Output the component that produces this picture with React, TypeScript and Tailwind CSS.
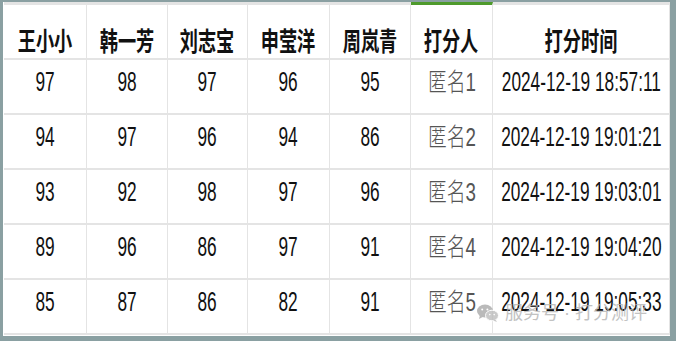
const HEADERS = ['王小小', '韩一芳', '刘志宝', '申莹洋', '周岚青', '打分人', '打分时间'];

const ROWS = [
  ['97', '98', '97', '96', '95', '匿名1', '2024-12-19 18:57:11'],
  ['94', '97', '96', '94', '86', '匿名2', '2024-12-19 19:01:21'],
  ['93', '92', '98', '97', '96', '匿名3', '2024-12-19 19:03:01'],
  ['89', '96', '86', '97', '91', '匿名4', '2024-12-19 19:04:20'],
  ['85', '87', '86', '82', '91', '匿名5', '2024-12-19 19:05:33'],
];

function WeChatIcon() {
  return (
    <svg width="22" height="18" viewBox="0 0 22 18" fill="#a9a9a9">
      <ellipse cx="8" cy="7" rx="8" ry="6.5" />
      <path d="M3 11 L2 15 L6.5 12.5 Z" />
      <ellipse cx="15" cy="11.5" rx="6.5" ry="5.3" fill="#bdbdbd" stroke="#fff" strokeWidth="1" />
      <path d="M18.5 15.5 L20 18 L16 16.4 Z" fill="#bdbdbd" />
      <circle cx="5.2" cy="5.5" r="1" fill="#fff" />
      <circle cx="10.4" cy="5.5" r="1" fill="#fff" />
      <circle cx="12.8" cy="10.6" r="0.8" fill="#fff" />
      <circle cx="17.2" cy="10.6" r="0.8" fill="#fff" />
    </svg>
  );
}

export default function App() {
  return (
    <div className="relative h-[341px] w-[676px] overflow-hidden border-t-2 border-r-[6px] border-b-[5px] border-l-[3px] border-[#8aa0a2] bg-white font-['Liberation_Sans','Noto_Sans_CJK_SC',sans-serif]">
      <div className="ml-px grid grid-cols-[83px_81px_80px_82px_81px_82px_minmax(0,1fr)]">
        {HEADERS.map((h, i) => (
          <div
            key={h}
            className={
              i === 5
                ? 'flex h-[58px] min-w-0 items-end justify-center border-t-[3px] border-r border-b-2 border-t-[#4e9a2c] border-r-[#e4e4e4] border-b-[#e4e4e4] pb-[3px]'
                : 'flex h-[58px] min-w-0 items-end justify-center border-t-[3px] border-r border-b-2 border-[#e4e4e4] pb-[3px]'
            }
          >
            <span className="inline-block shrink-0 scale-x-70 text-[26px] leading-[26px] font-bold whitespace-nowrap text-[#111]">{h}</span>
          </div>
        ))}
        {ROWS.map((row, r) =>
          row.map((v, c) => (
            <div
              key={`${r}-${c}`}
              className="flex h-[55px] min-w-0 items-start justify-center border-r border-b-2 border-[#e4e4e4] pt-[9px]"
            >
              <span
                className={
                  c === 5
                    ? 'inline-block shrink-0 scale-x-75 text-[25px] leading-[26px] font-light whitespace-nowrap text-[#555]'
                    : 'inline-block shrink-0 scale-x-64 text-[27px] leading-[26px] whitespace-nowrap text-[#111]'
                }
              >
                {v}
              </span>
            </div>
          )),
        )}
      </div>
      <div className="absolute top-[301px] left-[474px] flex items-center gap-[6px] opacity-80">
        <WeChatIcon />
        <span className="text-[18px] leading-[20px] whitespace-nowrap text-[#b3b3b3]">服务号 · 打分测评</span>
      </div>
    </div>
  );
}
